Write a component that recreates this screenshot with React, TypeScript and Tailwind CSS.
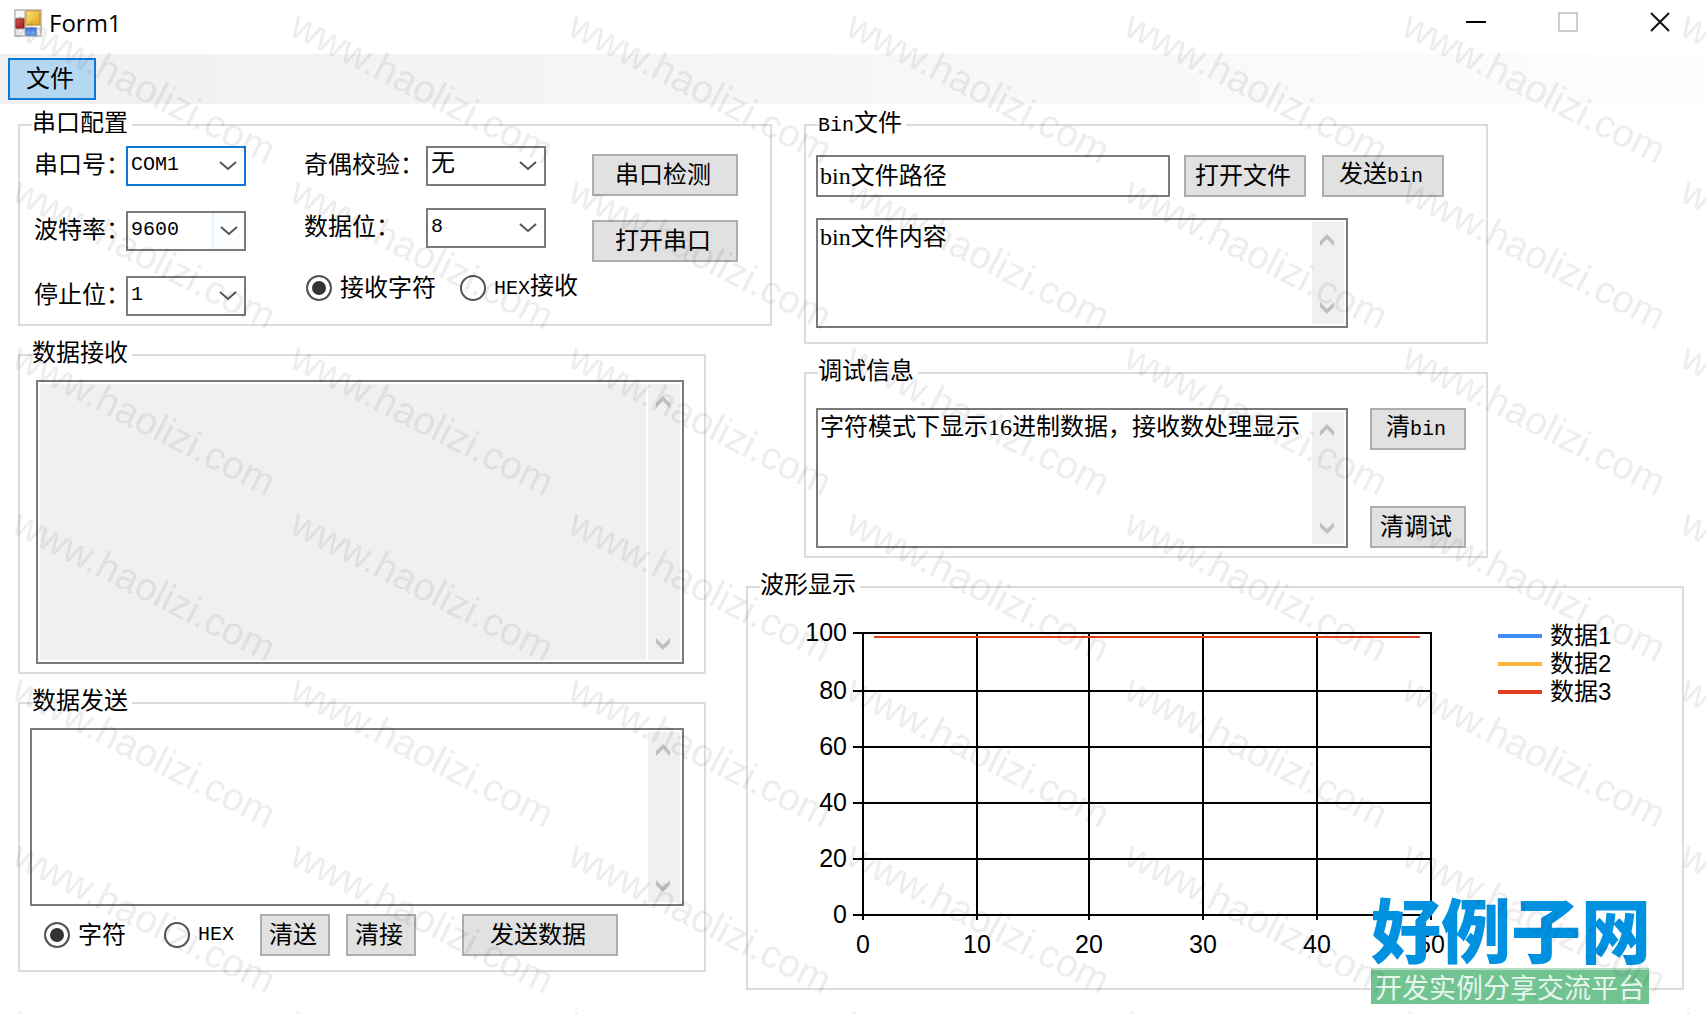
import type { ReactNode } from "react";
import clsx from "clsx";

const xTicks = [115, 229, 341, 455, 569, 683];
const yTicks = [31, 89, 145, 201, 257, 313];

const series = [
  { name: "数据1", color: "bg-[#418cf0]" },
  { name: "数据2", color: "bg-[#fcb441]" },
  { name: "数据3", color: "bg-[#e0401f]" },
];

function Latin({ children }: { children: ReactNode }) {
  return <span className="font-['Liberation_Mono'] text-xl">{children}</span>;
}

function GroupBox({
  title,
  className,
  children,
}: {
  title: ReactNode;
  className?: string;
  children: ReactNode;
}) {
  return (
    <fieldset className={clsx("min-w-0 border-2 border-[#dcdcdc]", className)}>
      <legend className="ml-3 h-[30px] pr-1 leading-[26px] whitespace-nowrap">
        {title}
      </legend>
      {children}
    </fieldset>
  );
}

function Button({
  className,
  children,
}: {
  className?: string;
  children: ReactNode;
}) {
  return (
    <button
      type="button"
      className={clsx(
        "h-[42px] shrink-0 border-2 border-[#adadad] bg-[#e1e1e1] pr-1 leading-6 whitespace-nowrap",
        className,
      )}
    >
      {children}
    </button>
  );
}

function SelectField({
  id,
  label,
  labelWidth,
  options,
  focused,
  hot,
}: {
  id: string;
  label: string;
  labelWidth: string;
  options: string[];
  focused?: boolean;
  hot?: boolean;
}) {
  return (
    <div className="flex h-10 items-center">
      <label
        htmlFor={id}
        className={clsx("shrink-0 pb-0.5 leading-6 whitespace-nowrap", labelWidth)}
      >
        {label}
      </label>
      <div className="relative h-10 w-[120px]">
        <select
          id={id}
          className={clsx(
            "h-full w-full appearance-none border-2 bg-white pb-0.5 pl-[3px] font-['Liberation_Mono','Noto_Sans_CJK_SC',monospace] outline-none",
            focused ? "border-[#0f78d7]" : "border-[#7a7a7a]",
            options[0] === "无" ? "text-2xl leading-7" : "text-xl",
          )}
        >
          {options.map((o) => (
            <option key={o}>{o}</option>
          ))}
        </select>
        <span
          className={clsx(
            "pointer-events-none absolute inset-y-0.5 right-0.5 flex w-8 items-center justify-center",
            hot && "border-l-2 border-[#e8f3fc] bg-[#fbfdff]",
          )}
        >
          <svg width="18" height="10" viewBox="0 0 18 10" fill="none">
            <path d="M1 1l8 7 8-7" stroke="#555" strokeWidth="2" />
          </svg>
        </span>
      </div>
    </div>
  );
}

function Radio({
  name,
  checked,
  children,
}: {
  name: string;
  checked?: boolean;
  children: ReactNode;
}) {
  return (
    <label className="flex shrink-0 items-center gap-2 leading-6 whitespace-nowrap">
      <input
        type="radio"
        name={name}
        defaultChecked={checked}
        className="size-[26px] appearance-none rounded-full border-2 border-[#555] bg-white checked:bg-[#333] checked:shadow-[inset_0_0_0_4px_white]"
      />
      {children}
    </label>
  );
}

function ScrollText({
  label,
  value,
  className,
  readOnly,
}: {
  label: string;
  value?: string;
  className?: string;
  readOnly?: boolean;
}) {
  return (
    <div
      className={clsx(
        "flex gap-0.5 border-2 border-[#7a7a7a] bg-white p-0.5",
        className,
      )}
    >
      <textarea
        aria-label={label}
        defaultValue={value}
        readOnly={readOnly}
        className={clsx(
          "min-w-0 flex-1 resize-none overflow-hidden leading-[30px] outline-none",
          readOnly ? "bg-[#f0f0f0]" : "bg-white",
        )}
      />
      <div className="flex w-8 flex-col items-center justify-between bg-[#f0f0f0] pt-3 pr-0.5 pb-2.5">
        <svg width="14" height="12" viewBox="0 0 14 12" fill="#bfbfbf">
          <path d="M0 12V7l7-7 7 7v5L7 5z" />
        </svg>
        <svg width="14" height="12" viewBox="0 0 14 12" fill="#bfbfbf">
          <path d="M0 0v5l7 7 7-7V0L7 7z" />
        </svg>
      </div>
    </div>
  );
}

function FormIcon() {
  return (
    <svg width="28" height="28" viewBox="0 0 28 28">
      <defs>
        <linearGradient id="gold" x1="0" y1="0" x2="1" y2="1">
          <stop offset="0" stopColor="#ffe48a" />
          <stop offset="1" stopColor="#e0a010" />
        </linearGradient>
        <linearGradient id="red" x1="0" y1="0" x2="1" y2="1">
          <stop offset="0" stopColor="#e0675c" />
          <stop offset="1" stopColor="#9c1410" />
        </linearGradient>
        <linearGradient id="blue" x1="0" y1="0" x2="0" y2="1">
          <stop offset="0" stopColor="#3a78dc" />
          <stop offset="1" stopColor="#86b4f8" />
        </linearGradient>
      </defs>
      <rect x="1" y="1" width="26" height="26" fill="#f6f6f6" stroke="#c4c4c4" strokeWidth="2" />
      <path d="M11 1v26M1 9h10M1 20h26M22 18v9" stroke="#cfcfcf" strokeWidth="2" />
      <rect x="12" y="2" width="14" height="14" fill="url(#gold)" stroke="#c58f1c" />
      <rect x="2" y="10" width="8" height="9" fill="url(#red)" stroke="#8d1b16" />
      <rect x="12" y="19" width="10" height="7" fill="url(#blue)" stroke="#3c6fc4" />
    </svg>
  );
}

function TitleBar() {
  return (
    <header className="flex h-[54px] items-start bg-white">
      <div className="flex h-[46px] flex-1 items-center gap-[7px] pl-3.5">
        <FormIcon />
        <h1 className="font-['Open_Sans',sans-serif] text-2xl">Form1</h1>
      </div>
      <button aria-label="Minimize" className="flex h-11 w-[92px] items-center justify-center">
        <svg width="20" height="20" viewBox="0 0 20 20">
          <path d="M0 10h20" stroke="#000" strokeWidth="2" />
        </svg>
      </button>
      <button aria-label="Maximize" className="flex h-11 w-[92px] items-center justify-center">
        <svg width="20" height="20" viewBox="0 0 20 20">
          <rect x="1" y="1" width="18" height="18" fill="none" stroke="#ccc" strokeWidth="2" />
        </svg>
      </button>
      <button aria-label="Close" className="flex h-11 w-[92px] items-center justify-center">
        <svg width="20" height="20" viewBox="0 0 20 20">
          <path d="M1 1l18 18M19 1L1 19" stroke="#111" strokeWidth="2" />
        </svg>
      </button>
    </header>
  );
}

function WaveChart() {
  return (
    <svg viewBox="0 0 700 386" className="min-w-0 flex-1" role="img" aria-label="波形显示">
      <g stroke="#000" strokeWidth="2">
        {xTicks.map((x) => (
          <line key={x} x1={x} x2={x} y1="30" y2="318" />
        ))}
        {yTicks.map((y) => (
          <line key={y} x1="105" x2="684" y1={y} y2={y} />
        ))}
      </g>
      <line x1="126" x2="672" y1="35" y2="35" stroke="#e0401f" strokeWidth="2" />
      <g className="font-['Liberation_Sans',sans-serif] text-[25px]">
        {yTicks.map((y, i) => (
          <text key={y} x="99" y={y + 8} textAnchor="end">
            {100 - i * 20}
          </text>
        ))}
        {xTicks.map((x, i) => (
          <text key={x} x={x} y="351" textAnchor="middle">
            {i * 10}
          </text>
        ))}
      </g>
    </svg>
  );
}

function Watermark() {
  return (
    <svg className="pointer-events-none absolute inset-0 h-full w-full" aria-hidden="true">
      <defs>
        <pattern id="mark" width="278" height="166" patternUnits="userSpaceOnUse">
          <text
            transform="translate(10 34) rotate(27)"
            fill="#000"
            fillOpacity="0.07"
            className="font-['Liberation_Sans',sans-serif] text-[39px]"
          >
            www.haolizi.com
          </text>
        </pattern>
      </defs>
      <rect width="100%" height="100%" fill="url(#mark)" />
    </svg>
  );
}

export default function App() {
  return (
    <div className="relative min-h-screen overflow-hidden bg-white font-['Liberation_Serif','Noto_Sans_CJK_SC',serif] text-2xl text-black">
      <TitleBar />
      <nav className="flex h-[50px] items-center bg-linear-to-r from-[#f0f0f0] to-[#fdfdfd] px-2">
        <button
          type="button"
          className="h-[42px] w-[88px] border-2 border-[#0f78d7] bg-[#b4d7f2] pr-1 leading-6"
        >
          文件
        </button>
      </nav>

      <main className="flex gap-10 pt-1.5 pr-[22px] pb-6 pl-[18px]">
        <div className="flex min-w-0 flex-[688] flex-col gap-3.5">
          <GroupBox title="串口配置" className="-mr-[66px]">
            <div className="flex items-start pt-1.5 pb-2 pl-3.5">
              <div className="flex flex-col gap-[25px]">
                <SelectField id="port" label="串口号：" labelWidth="w-[92px]" options={["COM1", "COM2", "COM3"]} focused />
                <SelectField id="baud" label="波特率：" labelWidth="w-[92px]" options={["9600", "19200", "115200"]} hot />
                <SelectField id="stop" label="停止位：" labelWidth="w-[92px]" options={["1", "2"]} />
              </div>
              <div className="ml-[58px] flex w-[288px] flex-col gap-[22px]">
                <SelectField id="parity" label="奇偶校验：" labelWidth="w-[122px]" options={["无", "奇", "偶"]} />
                <SelectField id="bits" label="数据位：" labelWidth="w-[122px]" options={["8", "7", "6"]} />
                <div className="flex h-9 items-center gap-6 pl-0.5">
                  <Radio name="recv" checked>
                    接收字符
                  </Radio>
                  <Radio name="recv">
                    <span>
                      <Latin>HEX</Latin>接收
                    </span>
                  </Radio>
                </div>
              </div>
              <div className="flex flex-col gap-6 pt-2">
                <Button className="w-[146px]">串口检测</Button>
                <Button className="w-[146px]">打开串口</Button>
              </div>
            </div>
          </GroupBox>

          <GroupBox title="数据接收">
            <div className="pt-2.5 pr-5 pb-2 pl-4">
              <ScrollText label="数据接收" className="h-[284px]" readOnly />
            </div>
          </GroupBox>

          <GroupBox title="数据发送">
            <div className="pt-2.5 pr-5 pb-3.5 pl-2.5">
              <ScrollText label="数据发送" className="h-[178px]" />
              <div className="mt-2 flex items-center pl-3.5">
                <div className="flex gap-[38px]">
                  <Radio name="send" checked>
                    字符
                  </Radio>
                  <Radio name="send">
                    <Latin>HEX</Latin>
                  </Radio>
                </div>
                <div className="ml-[26px] flex gap-4">
                  <Button className="w-[70px]">清送</Button>
                  <Button className="w-[70px]">清接</Button>
                </div>
                <Button className="ml-[46px] w-[156px]">发送数据</Button>
              </div>
            </div>
          </GroupBox>
        </div>

        <div className="flex min-w-0 flex-[938] flex-col gap-3.5">
          <GroupBox
            title={
              <>
                <Latin>Bin</Latin>文件
              </>
            }
            className="mr-[196px] ml-[58px]"
          >
            <div className="flex pt-[15px] pr-[42px] pl-2.5">
              <input
                aria-label="bin文件路径"
                defaultValue="bin文件路径"
                className="h-[42px] min-w-0 flex-1 border-2 border-[#7a7a7a] bg-white pb-1.5 pl-0.5 outline-none"
              />
              <Button className="ml-3.5 w-[122px]">打开文件</Button>
              <Button className="ml-4 w-[122px]">
                发送<Latin>bin</Latin>
              </Button>
            </div>
            <div className="pt-[21px] pr-[138px] pb-3.5 pl-2.5">
              <ScrollText label="bin文件内容" value="bin文件内容" className="h-[110px]" />
            </div>
          </GroupBox>

          <GroupBox title="调试信息" className="mr-[196px] ml-[58px]">
            <div className="flex gap-[22px] pt-5 pr-5 pb-2 pl-2.5">
              <ScrollText
                label="调试信息"
                value="字符模式下显示16进制数据，接收数处理显示"
                className="h-[140px] min-w-0 flex-1"
              />
              <div className="flex flex-col justify-between">
                <Button className="w-24">
                  清<Latin>bin</Latin>
                </Button>
                <Button className="w-24">清调试</Button>
              </div>
            </div>
          </GroupBox>

          <GroupBox title="波形显示">
            <div className="flex items-start">
              <WaveChart />
              <ul className="ml-[50px] w-[184px] pt-5">
                {series.map((s) => (
                  <li key={s.name} className="flex h-7 items-center gap-2 leading-7">
                    <span className={clsx("h-1 w-11", s.color)} />
                    <span className="font-['Liberation_Sans','Noto_Sans_CJK_SC',sans-serif]">{s.name}</span>
                  </li>
                ))}
              </ul>
            </div>
          </GroupBox>
        </div>
      </main>

      <div className="absolute right-[57px] bottom-2.5 w-[278px] font-['Noto_Sans_CJK_SC',sans-serif] whitespace-nowrap">
        <p className="text-[70px] leading-[80px] font-black text-[#0091e0]">好例子网</p>
        <p className="border-t-2 border-[#b8dcc5] bg-[#72c392] text-center text-[27px] leading-[34px] text-[#e8f5ec]">
          开发实例分享交流平台
        </p>
      </div>

      <Watermark />
    </div>
  );
}
